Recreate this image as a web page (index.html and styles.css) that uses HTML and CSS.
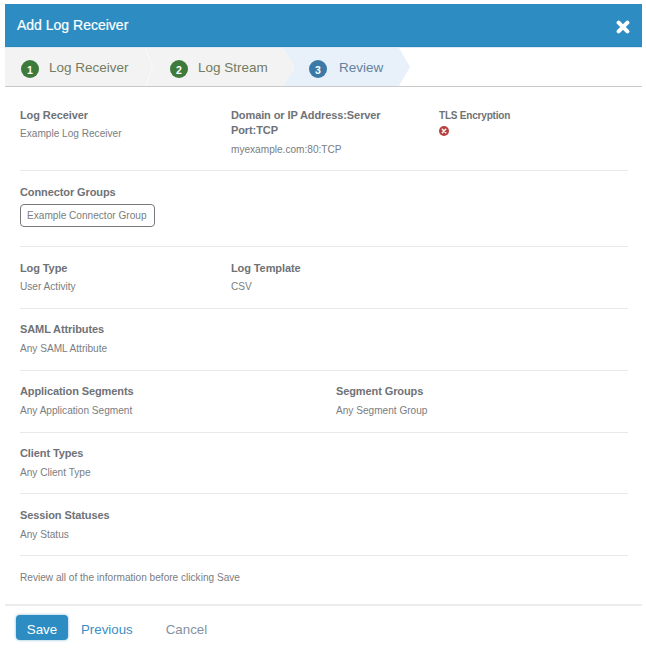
FILE: index.html
```html
<!DOCTYPE html>
<html lang="en">
<head>
<meta charset="utf-8">
<title>Add Log Receiver</title>
<link rel="stylesheet" href="styles.css">
</head>
<body>
<div class="modal">
  <header class="modal-header">
    <span class="modal-title">Add Log Receiver</span>
    <svg class="close-icon" viewBox="0 0 16 16" width="14" height="14" aria-hidden="true"><path d="M3 3 L13 13 M13 3 L3 13" stroke="#fff" stroke-width="4.6" stroke-linecap="round" fill="none"/></svg>
  </header>
  <nav class="steps">
    <div class="step step-one"><span class="step-num done">1</span><span class="step-label">Log Receiver</span></div>
    <div class="step step-two"><span class="step-num done">2</span><span class="step-label">Log Stream</span></div>
    <div class="step step-three"><span class="step-num active">3</span><span class="step-label">Review</span></div>
  </nav>
  <main class="content">
    <section class="row row-first cols-three">
      <div class="field"><div class="label">Log Receiver</div><div class="value">Example Log Receiver</div></div>
      <div class="field field-narrow"><div class="label">Domain or IP Address:Server Port:TCP</div><div class="value">myexample.com:80:TCP</div></div>
      <div class="field"><div class="label label-tls">TLS Encryption</div>
        <svg class="tls-icon" viewBox="0 0 10 10" width="10" height="10" aria-hidden="true"><circle cx="5" cy="5" r="5" fill="#b8403f"/><path d="M3.3 3.3 L6.7 6.7 M6.7 3.3 L3.3 6.7" stroke="#fff" stroke-width="1.5" stroke-linecap="round"/></svg>
      </div>
    </section>
    <section class="row row-chip">
      <div class="label">Connector Groups</div>
      <span class="chip">Example Connector Group</span>
    </section>
    <section class="row cols-three">
      <div class="field"><div class="label">Log Type</div><div class="value">User Activity</div></div>
      <div class="field"><div class="label">Log Template</div><div class="value">CSV</div></div>
    </section>
    <section class="row row-tight">
      <div class="field"><div class="label">SAML Attributes</div><div class="value">Any SAML Attribute</div></div>
    </section>
    <section class="row row-tight cols-two">
      <div class="field"><div class="label">Application Segments</div><div class="value">Any Application Segment</div></div>
      <div class="field"><div class="label">Segment Groups</div><div class="value">Any Segment Group</div></div>
    </section>
    <section class="row row-tight row-short">
      <div class="field"><div class="label">Client Types</div><div class="value">Any Client Type</div></div>
    </section>
    <section class="row row-last">
      <div class="field"><div class="label">Session Statuses</div><div class="value">Any Status</div></div>
    </section>
    <p class="note">Review all of the information before clicking Save</p>
  </main>
  <footer class="footer">
    <button class="btn-save" type="button">Save</button>
    <a class="link link-prev">Previous</a>
    <a class="link link-cancel">Cancel</a>
  </footer>
</div>
</body>
</html>
```
FILE: styles.css
```css
* { box-sizing: border-box; }
html, body { height: 100%; }
body {
  margin: 0;
  padding: 4px 4px 0 5px;
  background: #fff;
  font-family: "Liberation Sans", Arial, sans-serif;
  color: #6b6e72;
  overflow: hidden;
}
.modal { display: flex; flex-direction: column; }
.modal-header {
  height: 43px;
  background: #2d8cc2;
  display: flex;
  align-items: center;
  justify-content: space-between;
  padding: 0 12px 0 12px;
  border-bottom: 1px solid #2a86ba;
}
.modal-title { color: #fff; font-size: 14px; font-weight: 400; -webkit-text-stroke: 0.2px #fff; }
.close-icon { display: block; margin-top: 3px; }
.steps {
  height: 40px;
  display: flex;
  border-top: 1px solid #dcebf4;
  border-bottom: 1px solid #c9c9c9;
  background: linear-gradient(90deg, #f9f9f9 0 200px, #fff 200px);
}
.step { display: flex; align-items: center; height: 100%; font-size: 13.5px; }
.step-one {
  width: 147px;
  padding-left: 16px;
  background: #f3f3f3;
  clip-path: polygon(0 0, 140px 0, 147px 50%, 140px 100%, 0 100%);
}
.step-two {
  width: 150px;
  margin-left: -7px;
  padding-left: 25px;
  background: #f3f3f3;
  clip-path: polygon(1px 0, 138px 0, 150px 50%, 138px 100%, 1px 100%, 8px 50%);
}
.step-three {
  width: 127px;
  margin-left: -12px;
  padding-left: 26px;
  background: #e8f1fa;
  clip-path: polygon(0 0, 116px 0, 127px 50%, 116px 100%, 0 100%, 12px 50%);
}
.step-num {
  width: 18px;
  height: 18px;
  border-radius: 50%;
  display: flex;
  align-items: center;
  justify-content: center;
  color: #fff;
  font-size: 10.5px;
  font-weight: 700;
  margin-right: 10px;
  margin-top: 4px;
  padding-top: 2px;
}
.step-three .step-num { margin-right: 12px; }
.done { background: #3d7a3c; }
.active { background: #3b79a6; }
.step-one .step-label, .step-two .step-label { color: #737c60; }
.step-three .step-label { color: #64829e; }
.content { padding: 0 14px 0 15px; }
.row {
  border-bottom: 1px solid #e9e9e9;
  padding-top: 14px;
  height: 62px;
}
.row-first { height: 84px; padding-top: 21px; }
.row-chip { height: 76px; padding-top: 14px; }
.row-short { height: 61px; }
.row-tight { padding-top: 13px; }
.row-tight .value, .row-last .value { margin-top: 5px; }
.cols-three { display: grid; grid-template-columns: 211px 208px 1fr; }
.cols-two { display: grid; grid-template-columns: 316px 1fr; }
.label { font-size: 11px; font-weight: 700; line-height: 15px; color: #6f7276; letter-spacing: -0.1px; }
.label-tls { font-size: 10px; letter-spacing: -0.2px; }
.value { font-size: 10.1px; line-height: 14px; margin-top: 4px; color: #7a7d80; }
.field-narrow { width: 170px; }
.field-narrow .value { margin-top: 5px; }
.tls-icon { display: block; margin-top: 3px; }
.chip {
  display: inline-block;
  margin-top: 4px;
  height: 23px;
  line-height: 21px;
  padding: 0 7px 0 6px;
  border: 1px solid #77797c;
  border-radius: 4px;
  font-size: 10.1px;
  color: #7a7d80;
}
.note { margin: 15px 0 0; font-size: 10.1px; line-height: 14px; color: #7a7d80; height: 33px; }
.footer {
  border-top: 2px solid #ececec;
  height: 50px;
  display: flex;
  align-items: flex-start;
  padding: 9px 0 0 11px;
  font-size: 13.3px;
}
.btn-save {
  width: 52px;
  height: 25px;
  padding: 3px 0 0;
  border: 0;
  border-radius: 4px;
  background: #2d8cc2;
  color: #fff;
  font: inherit;
  box-shadow: 0 0 3px rgba(45, 140, 194, 0.6);
}
.link { line-height: 25px; margin-top: 2px; }
.link-prev { margin-left: 13px; color: #3a8fc4; }
.link-cancel { margin-left: 33px; color: #8391a1; }
```
